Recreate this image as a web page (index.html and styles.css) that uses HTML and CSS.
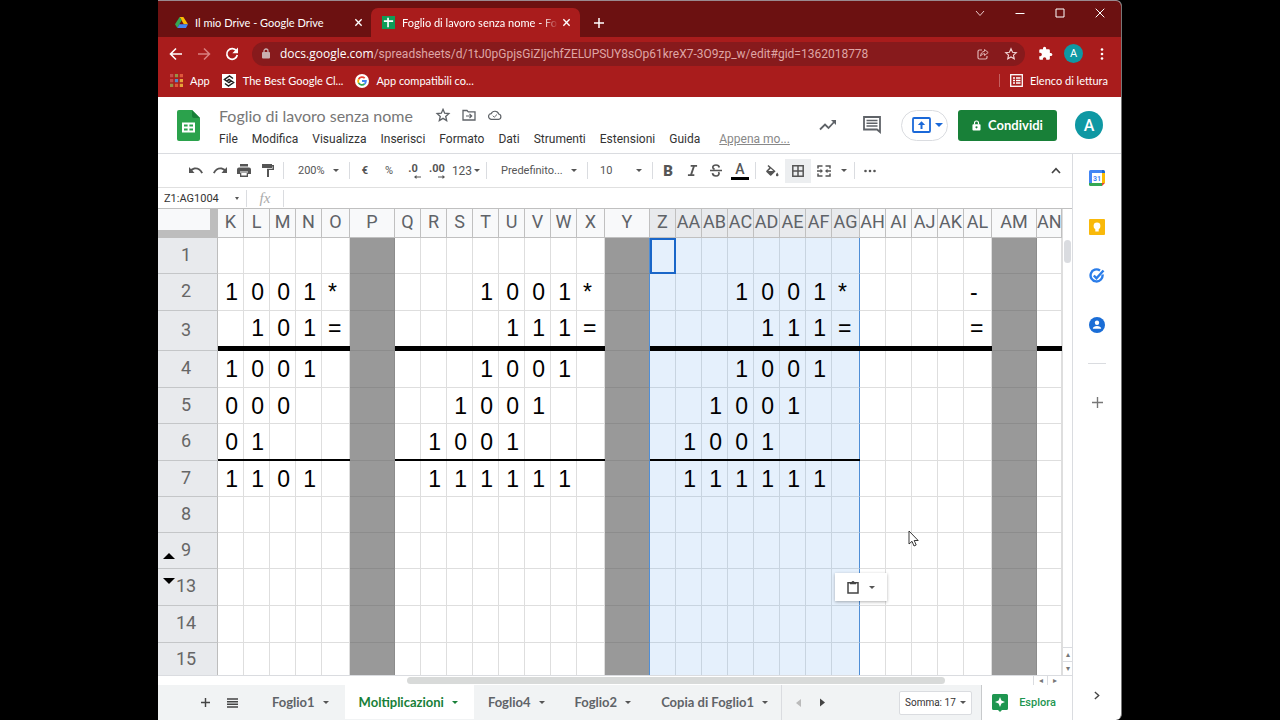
FILE: index.html
```html
<!DOCTYPE html>
<html lang="it">
<head>
<meta charset="utf-8">
<title>Foglio di lavoro senza nome</title>
<link rel="stylesheet" href="styles.css">
</head>
<body>
<div class="window">
  <div class="tabstrip">
    <div class="tab">
      <svg class="favicon" viewBox="0 0 14 14"><path d="M5 1h4l5 8H9.500z" fill="#fbbc04"/><path d="M5 1l2.200 3.700L2.500 13 0 9z" fill="#34a853"/><path d="M4.700 9H14l-2.200 4H2.500z" fill="#4285f4"/></svg>
      <span class="tab-title">Il mio Drive - Google Drive</span>
      <button class="tab-close" aria-label="Chiudi scheda"><svg viewBox="0 0 10 10" width="9" height="9"><path d="M1.500 1.500l7 7M8.500 1.500l-7 7" stroke="#fff" stroke-width="1.500"/></svg></button>
    </div>
    <div class="tab tab-active">
      <svg class="favicon" viewBox="0 0 14 14"><rect width="14" height="14" fill="#0f9d58"/><path d="M2 5.500h10M6.500 2v10" stroke="#fff" stroke-width="1.800"/></svg>
      <span class="tab-title tab-title-fade">Foglio di lavoro senza nome - Fo</span>
      <button class="tab-close" aria-label="Chiudi scheda"><svg viewBox="0 0 10 10" width="9" height="9"><path d="M1.500 1.500l7 7M8.500 1.500l-7 7" stroke="#fff" stroke-width="1.500"/></svg></button>
    </div>
    <button class="new-tab" aria-label="Nuova scheda"><svg viewBox="0 0 12 12" width="12" height="12"><path d="M6 1v10M1 6h10" stroke="#fff" stroke-width="1.500"/></svg></button>
    <div class="window-controls">
      <button aria-label="Cerca schede"><svg viewBox="0 0 10 10" width="10" height="10"><path d="M1 3l4 4.500L9 3" fill="none" stroke="#e9c9c9"/></svg></button>
      <button aria-label="Riduci"><svg viewBox="0 0 10 10" width="10" height="10"><path d="M.5 5.500h9" stroke="#fff"/></svg></button>
      <button aria-label="Ingrandisci"><svg viewBox="0 0 10 10" width="10" height="10"><path d="M1 1h8v8H1z" fill="none" stroke="#fff"/></svg></button>
      <button aria-label="Chiudi"><svg viewBox="0 0 10 10" width="10" height="10"><path d="M.7.700l8.600 8.600M9.300.700L.7 9.300" stroke="#fff"/></svg></button>
    </div>
  </div>

  <div class="navbar">
    <button class="nav-btn" aria-label="Indietro"><svg viewBox="0 0 14 14" width="14" height="14"><path d="M13 7H2M7 1.500L1.500 7 7 12.500" fill="none" stroke="#fff" stroke-width="1.600"/></svg></button>
    <button class="nav-btn" aria-label="Avanti"><svg viewBox="0 0 14 14" width="14" height="14"><path d="M1 7h11M7 1.500L12.500 7 7 12.500" fill="none" stroke="#d98080" stroke-width="1.500"/></svg></button>
    <button class="nav-btn" aria-label="Ricarica"><svg viewBox="0 0 14 14" width="14" height="14"><path d="M11.500 4A5.300 5.300 0 1 0 12.300 8" fill="none" stroke="#fff" stroke-width="1.700"/><path d="M13 .5v5.700H7.300z" fill="#fff"/></svg></button>
    <div class="address">
      <svg viewBox="0 0 8 11" width="8" height="11"><rect y="4" width="8" height="6.500" rx="1" fill="#c9b0b0"/><path d="M2 4.500V3a2 2 0 0 1 4 0v1.500" fill="none" stroke="#c9b0b0" stroke-width="1.300"/></svg>
      <label for="url">docs.google.com</label><input id="url" value="/spreadsheets/d/1tJ0pGpjsGiZIjchfZELUPSUY8sOp61kreX7-3O9zp_w/edit#gid=1362018778">
      <button class="address-btn" aria-label="Condividi pagina"><svg viewBox="0 0 12 12" width="12" height="12"><path d="M5 2H2.500A1.500 1.500 0 0 0 1 3.500v6A1.500 1.500 0 0 0 2.500 11h6A1.500 1.500 0 0 0 10 9.500V8" fill="none" stroke="#e0b4b4" stroke-width="1.200"/><path d="M7.500 1.500L11.200 4.500 7.500 7.500V5.700C5.500 5.700 4.300 6.700 3.500 8.200 3.700 5.500 5 3.600 7.500 3.300z" fill="none" stroke="#e0b4b4"/></svg></button>
      <button class="address-btn" aria-label="Preferiti"><svg viewBox="0 0 24 24" width="14" height="14"><path d="M12 3l2.700 6 6.300.6-4.800 4.300 1.400 6.400L12 17l-5.600 3.300 1.400-6.400L3 9.600 9.300 9z" fill="none" stroke="#f0d0d0" stroke-width="2"/></svg></button>
    </div>
    <button class="nav-btn" aria-label="Estensioni"><svg viewBox="0 0 24 24" width="15" height="15"><path fill="#fff" d="M20.500 11H19V7a2 2 0 0 0-2-2h-4V3.500a2.500 2.500 0 0 0-5 0V5H4a2 2 0 0 0-2 2v3.800h1.500a2.700 2.700 0 0 1 0 5.400H2V20c0 1.100.9 2 2 2h3.800v-1.500a2.700 2.700 0 0 1 5.400 0V22H17a2 2 0 0 0 2-2v-4h1.500a2.500 2.500 0 0 0 0-5z"/></svg></button>
    <button class="avatar avatar-small">A</button>
    <button class="nav-btn" aria-label="Menu"><svg viewBox="0 0 4 14" width="4" height="14"><g fill="#fff"><circle cx="2" cy="2.500" r="1.300"/><circle cx="2" cy="7" r="1.300"/><circle cx="2" cy="11.500" r="1.300"/></g></svg></button>
  </div>

  <div class="bookmarks">
    <a href="#"><svg viewBox="0 0 12 12" width="13" height="13"><path d="M0 0h3v3H0zM0 4.500h3v3H0z" fill="#c74c4c"/><path d="M0 9h3v3H0zM4.500 0h3v3h-3z" fill="#9a8f45"/><path d="M9 0h3v3H9zM4.500 9h3v3h-3z" fill="#e0573b"/><path d="M4.500 4.500h3v3h-3z" fill="#5b86c8"/><path d="M9 4.500h3v3H9zM9 9h3v3H9z" fill="#e8a33a"/></svg>App</a>
    <a href="#"><svg viewBox="0 0 14 14" width="14" height="14"><rect width="14" height="14" fill="#fff"/><path d="M11 4.500L7.500 2 2.500 5.500 7 8.500l2-1.300M3 9.500L6.500 12l5-3.500L7 5.500 5 6.800" fill="none" stroke="#222" stroke-width="1.500"/></svg>The Best Google Cl...</a>
    <a href="#"><svg viewBox="0 0 14 14" width="14" height="14"><circle cx="7" cy="7" r="7" fill="#fff"/><g fill="none" stroke-width="1.800"><path d="M3.600 5.200A3.900 3.900 0 0 1 9.700 4.200" stroke="#ea4335"/><path d="M3.600 5.200a3.900 3.900 0 0 0 0 3.700" stroke="#fbbc04"/><path d="M3.600 8.900a3.900 3.900 0 0 0 5.900 1.100" stroke="#34a853"/><path d="M9.500 10A3.900 3.900 0 0 0 10.900 7H7" stroke="#4285f4"/></g></svg>App compatibili co...</a>
    <a href="#" class="reading-list"><svg viewBox="0 0 13 13" width="13" height="13"><rect x=".7" y=".7" width="11.600" height="11.600" fill="none" stroke="#fff" stroke-width="1.300"/><path d="M3 4h2M3 6.500h2M3 9h2M6 4h4.500M6 6.500h4.500M6 9h4.500" stroke="#fff" stroke-width="1.300"/></svg>Elenco di lettura</a>
  </div>

  <header class="doc-header">
    <svg class="sheets-logo" viewBox="0 0 23 31" width="23" height="31"><path d="M2 0h13l8 8v21a2 2 0 0 1-2 2H2a2 2 0 0 1-2-2V2a2 2 0 0 1 2-2z" fill="#2ba24c"/><path d="M15 0l8 8h-6a2 2 0 0 1-2-2z" fill="#188038"/><path d="M5 12.500h13v10H5zM7 14.500v2h3.600v-2zM12.400 14.500v2H16v-2zM7 18.500v2h3.600v-2zM12.400 18.500v2H16v-2z" fill="#fff" fill-rule="evenodd"/></svg>
    <div class="doc-info">
      <div class="title-row">
        <input class="doc-title" aria-label="Rinomina" value="Foglio di lavoro senza nome">
        <button class="icon-btn" aria-label="Speciali"><svg viewBox="0 0 24 24" width="16" height="16"><path d="M12 3.500l2.500 5.800 6.300.6-4.700 4.200 1.400 6.200L12 17l-5.500 3.300 1.400-6.200-4.700-4.200 6.300-.6z" fill="none" stroke="#5f6368" stroke-width="2"/></svg></button>
        <button class="icon-btn" aria-label="Sposta"><svg viewBox="0 0 14 12" width="14" height="12"><path d="M1 1.500h4l1.300 1.400H13v8.100H1z" fill="none" stroke="#5f6368" stroke-width="1.300"/><path d="M4 7h5.500M7.500 4.800L9.700 7 7.500 9.200" fill="none" stroke="#5f6368" stroke-width="1.200"/></svg></button>
        <button class="icon-btn" aria-label="Stato"><svg viewBox="0 0 14 10" width="14" height="10"><path d="M3.500 9.300a2.800 2.800 0 0 1-.3-5.600 4 4 0 0 1 7.500.3 2.700 2.700 0 0 1 0 5.300z" fill="none" stroke="#5f6368" stroke-width="1.200"/><path d="M4.800 5.700l1.500 1.500 2.700-2.700" fill="none" stroke="#5f6368"/></svg></button>
      </div>
      <nav class="menu">
        <button>File</button><button>Modifica</button><button>Visualizza</button><button>Inserisci</button><button>Formato</button><button>Dati</button><button>Strumenti</button><button>Estensioni</button><button>Guida</button><a href="#">Appena mo...</a>
      </nav>
    </div>
    <div class="doc-actions">
      <button class="icon-btn" aria-label="Attività"><svg viewBox="0 0 18 12" width="18" height="12"><path d="M1 10.500L6 5.500l3.500 3.500L16 2" fill="none" stroke="#5f6368" stroke-width="1.800"/><path d="M12 1h5v5z" fill="#5f6368"/></svg></button>
      <button class="icon-btn comments" aria-label="Commenti"><svg viewBox="0 0 18 18" width="18" height="18"><path d="M1 1h16v15l-3-2.500H1z" fill="none" stroke="#5f6368" stroke-width="1.800"/><path d="M3.500 4.500h11M3.500 7.200h11M3.500 10h11" stroke="#5f6368" stroke-width="1.500"/></svg></button>
      <button class="present" aria-label="Presenta"><svg viewBox="0 0 19 16" width="19" height="16"><rect x="1" y="1" width="17" height="14" rx="1" fill="none" stroke="#1a68d8" stroke-width="1.800"/><path d="M9.500 12V6" stroke="#1a68d8" stroke-width="2"/><path d="M5.800 8L9.500 4.200 13.200 8z" fill="#1a68d8"/></svg><span class="caret caret-blue"></span></button>
      <button class="share"><svg viewBox="0 0 10 12" width="9" height="11"><rect x=".5" y="4.500" width="9" height="7" rx="1" fill="#fff"/><path d="M2.800 5V3.200a2.200 2.200 0 0 1 4.400 0V5" fill="none" stroke="#fff" stroke-width="1.300"/><circle cx="5" cy="8" r="1.200" fill="#188038"/></svg>Condividi</button>
      <button class="avatar">A</button>
    </div>
  </header>

  <div class="main">
    <div class="editor">
      <div class="toolbar">
        <button class="tool" aria-label="Annulla"><svg viewBox="0 0 14 8" width="14" height="8"><path d="M0 0l1.900 2C5.500-.8 11.500 0 14 5.800l-1.700.7C10 2 6.500 1.400 3.400 3.600L5.500 6H0z" fill="#555"/></svg></button>
        <button class="tool" aria-label="Ripeti"><svg viewBox="0 0 14 8" width="14" height="8"><path d="M14 0l-1.900 2C8.500-.8 2.500 0 0 5.800l1.700.7C4 2 7.500 1.400 10.600 3.600L8.500 6H14z" fill="#555"/></svg></button>
        <button class="tool" aria-label="Stampa"><svg viewBox="0 0 14 13" width="14" height="13"><path d="M3 0h8v2.500H3zM2 3.500h10a2 2 0 0 1 2 2V10h-3V7.500H3V10H0V5.500a2 2 0 0 1 2-2zM4.300 9h5.400v2.500H4.300zM3 8.500V13h8V8.500z" fill="#555" fill-rule="evenodd"/></svg></button>
        <button class="tool" aria-label="Copia formattazione"><svg viewBox="0 0 12 13" width="12" height="13"><path d="M0 0h10v4H0zM10 1h2v5H7v7H5V4.700h5.500V2.500H10z" fill="#555"/></svg></button>
        <span class="sep"></span>
        <label class="drop zoom"><select aria-label="Zoom"><option>200%</option></select></label>
        <span class="sep"></span>
        <button class="tool bold-tool">€</button>
        <button class="tool">%</button>
        <button class="tool decimal">.0<svg viewBox="0 0 7 4" width="7" height="4"><path d="M0 2l2.500-2v1.500H7v1H2.500V4z" fill="#555"/></svg></button>
        <button class="tool decimal">.00<svg viewBox="0 0 7 4" width="7" height="4"><path d="M7 2L4.500 0v1.500H0v1h4.500V4z" fill="#555"/></svg></button>
        <button class="tool number">123<span class="caret"></span></button>
        <span class="sep"></span>
        <label class="drop font"><select aria-label="Carattere"><option>Predefinito...</option></select></label>
        <span class="sep"></span>
        <label class="drop size"><select aria-label="Dimensione"><option>10</option></select></label>
        <span class="sep"></span>
        <button class="tool bold-big">B</button>
        <button class="tool" aria-label="Corsivo"><svg viewBox="0 0 12 12" width="11" height="11"><path d="M4 1h7M1 11h7M7.700 1L4.300 11" stroke="#555" stroke-width="2"/></svg></button>
        <button class="tool" aria-label="Barrato"><svg viewBox="0 0 12 13" width="12" height="13"><path d="M0 6.500h12" stroke="#555" stroke-width="1.500"/><path d="M9.300 3.500C9 1.800 7.800 1 6 1 4 1 2.800 2 2.800 3.300c0 1 .7 1.700 1.800 2.100M8.500 8c1.500 2-.2 4-2.500 4-2 0-3.300-1-3.500-2.800" fill="none" stroke="#555" stroke-width="1.700"/></svg></button>
        <button class="tool text-color">A</button>
        <span class="sep"></span>
        <button class="tool wide" aria-label="Riempimento"><svg viewBox="0 0 13 12" width="13" height="12"><path d="M2.500 0L1.500 1l1.800 1.800L.4 5.700a.9.900 0 0 0 0 1.200l3.700 3.700a.9.900 0 0 0 1.200 0L9.600 6.300z" fill="#555"/><path d="M2.300 6L4.800 3.600 7.200 6z" fill="#fff"/><path d="M11.200 7.500c2 2.500 1.300 3.800 0 3.800s-2-1.300 0-3.800z" fill="#555"/></svg></button>
        <button class="tool wide tool-on" aria-label="Bordi"><svg viewBox="0 0 12 12" width="12" height="12"><path d="M.8.800h10.400v10.400H.8zM6 1v10M1 6h10" fill="none" stroke="#555" stroke-width="1.500"/></svg></button>
        <button class="tool wide" aria-label="Unisci celle"><svg viewBox="0 0 14 12" width="14" height="12"><path d="M1 3.500V1h4.500M8.500 1H13v2.500M1 8.500V11h4.500M8.500 11H13V8.500M0 6h4.500M14 6H9.500" fill="none" stroke="#555" stroke-width="1.500"/><path d="M3.500 3.800L6 6 3.500 8.200zM10.500 3.800L8 6l2.500 2.200z" fill="#555"/></svg></button>
        <button class="tool narrow" aria-label="Tipo di unione"><span class="caret"></span></button>
        <span class="sep"></span>
        <button class="tool" aria-label="Altro"><svg viewBox="0 0 12 4" width="12" height="4"><g fill="#555"><circle cx="1.500" cy="2" r="1.300"/><circle cx="6" cy="2" r="1.300"/><circle cx="10.500" cy="2" r="1.300"/></g></svg></button>
        <button class="tool collapse" aria-label="Nascondi menu"><svg viewBox="0 0 10 7" width="10" height="7"><path d="M1 6l4-4.300L9 6" fill="none" stroke="#444" stroke-width="1.700"/></svg></button>
      </div>

      <div class="formula-bar">
        <input class="name-box" aria-label="Intervallo" value="Z1:AG1004"><span class="caret caret-small"></span>
        <label class="fx" for="formula">fx</label>
        <input id="formula" class="formula">
      </div>

      <div class="grid-area">
        <div class="grid-scroll">
          <table class="grid"><colgroup></colgroup><thead></thead><tbody></tbody></table>
          <button class="paste" aria-label="Opzioni incolla"><svg viewBox="0 0 12 14" width="12" height="14"><path d="M1 2.800h10V13H1z" fill="none" stroke="#444" stroke-width="1.500"/><path d="M3 2h1.500a1.600 1.600 0 0 1 3 0H9v2.200H3z" fill="#444"/></svg><span class="caret"></span></button>
          <svg class="pointer" viewBox="0 0 11 17" width="11" height="17"><path d="M1 1v13l3-2.700 2 4.700 2.200-1-2-4.500h4z" fill="#fff" stroke="#222" stroke-width=".9"/></svg>
        </div>
        <div class="vscroll"><span class="vthumb"></span><button aria-label="Su">▴</button><button aria-label="Giù">▾</button></div>
      </div>

      <div class="hscroll"><div class="htrack"><span class="hthumb"></span></div><button aria-label="Sinistra">◂</button><button aria-label="Destra">▸</button></div>

      <div class="sheetbar">
        <button class="tool" aria-label="Aggiungi foglio"><svg viewBox="0 0 10 10" width="9" height="9"><path d="M5 0v10M0 5h10" stroke="#444" stroke-width="1.600"/></svg></button>
        <button class="tool all-sheets" aria-label="Tutti i fogli"><svg viewBox="0 0 11 10" width="11" height="10"><path d="M0 1h11M0 3.700h11M0 6.300h11M0 9h11" stroke="#444" stroke-width="1.500"/></svg></button>
        <div class="sheet-tabs">
          <button>Foglio1<span class="caret"></span></button>
          <button class="sheet-active">Moltiplicazioni<span class="caret"></span></button>
          <button>Foglio4<span class="caret"></span></button>
          <button>Foglio2<span class="caret"></span></button>
          <button>Copia di Foglio1<span class="caret"></span></button>
        </div>
        <div class="sheet-arrows">
          <button class="tool" aria-label="Precedente"><svg viewBox="0 0 5 8" width="5" height="8"><path d="M5 0v8L0 4z" fill="#bbb"/></svg></button>
          <button class="tool" aria-label="Successivo"><svg viewBox="0 0 5 8" width="5" height="9"><path d="M0 0v8l5-4z" fill="#444"/></svg></button>
        </div>
        <label class="drop sum"><select aria-label="Riepilogo"><option>Somma: 17</option></select></label>
        <button class="explore"><svg viewBox="0 0 16 18" width="16" height="18"><path d="M1.500 0h13A1.500 1.500 0 0 1 16 1.500v13a1.500 1.500 0 0 1-1.500 1.500H10l-2 2-2-2H1.500A1.500 1.500 0 0 1 0 14.500v-13A1.500 1.500 0 0 1 1.500 0z" fill="#1e9650"/><path d="M8 3l1.400 3.600L13 8 9.400 9.400 8 13 6.600 9.400 3 8l3.600-1.400z" fill="#fff"/></svg>Esplora</button>
      </div>
    </div>

    <aside class="side">
      <button aria-label="Calendar"><svg viewBox="0 0 16 16" width="16" height="16"><path d="M0 1.500A1.500 1.500 0 0 1 1.500 0H13v3H3v10H0z" fill="#4285f4"/><path d="M13 0h1.500A1.500 1.500 0 0 1 16 1.500V3h-3z" fill="#1967d2"/><path d="M13 3h3v10h-3z" fill="#fbbc04"/><path d="M0 13h13v3H1.500A1.500 1.500 0 0 1 0 14.500z" fill="#34a853"/><path d="M13 13h3l-3 3z" fill="#ea4335"/><path d="M3 3h10v10H3z" fill="#fff"/><text x="8" y="10.500" text-anchor="middle" font-size="7" font-family="Roboto, sans-serif" font-weight="700" fill="#4285f4">31</text></svg></button>
      <button aria-label="Keep"><svg viewBox="0 0 16 16" width="16" height="16"><rect width="16" height="16" rx="1" fill="#f9b90a"/><circle cx="8" cy="7" r="3.400" fill="#fff"/><path d="M6.300 9h3.400v3.500H6.300z" fill="#fff"/></svg></button>
      <button aria-label="Tasks"><svg viewBox="0 0 16 16" width="16" height="16"><path d="M11 2.500A6 6 0 1 0 13.500 6.500" fill="none" stroke="#2b7de9" stroke-width="2.400"/><path d="M4.800 7.500l2.700 2.700L14.500 2.500" fill="none" stroke="#2b7de9" stroke-width="2.400"/></svg></button>
      <button aria-label="Contatti"><svg viewBox="0 0 16 16" width="16" height="16"><circle cx="8" cy="8" r="8" fill="#1a6dd6"/><circle cx="8" cy="5.700" r="2.200" fill="#fff"/><path d="M3.800 11.800c0-3.700 8.400-3.700 8.400 0z" fill="#fff"/></svg></button>
      <span class="side-line"></span>
      <button aria-label="Componenti aggiuntivi"><svg viewBox="0 0 12 12" width="11" height="11"><path d="M6 0v12M0 6h12" stroke="#777" stroke-width="1.500"/></svg></button>
      <button class="side-hide" aria-label="Nascondi riquadro"><svg viewBox="0 0 7 10" width="6" height="9"><path d="M1 1l4.500 4L1 9" fill="none" stroke="#444" stroke-width="1.600"/></svg></button>
    </aside>
  </div>
</div>
<script src="grid.js"></script>
</body>
</html>
```
FILE: grid.js
```js
const columns = ['K','L','M','N','O','P','Q','R','S','T','U','V','W','X','Y','Z',
  'AA','AB','AC','AD','AE','AF','AG','AH','AI','AJ','AK','AL','AM','AN'];
const spacers = ['P', 'Y', 'AM'];
const operators = ['O', 'X', 'AG', 'AL'];
const index = name => columns.indexOf(name);
const between = (name, from, to) => index(name) >= index(from) && index(name) <= index(to);

// Each entry is [first column, values running to the right].
const rows = [
  { n: 1, cells: [] },
  { n: 2, cells: [['K', '1001*'], ['T', '1001*'], ['AC', '1001*'], ['AL', '-']] },
  { n: 3, cells: [['L', '101='], ['U', '111='], ['AD', '111='], ['AL', '=']] },
  { n: 4, cells: [['K', '1001'], ['T', '1001'], ['AC', '1001']] },
  { n: 5, cells: [['K', '000'], ['S', '1001'], ['AB', '1001']] },
  { n: 6, cells: [['K', '01'], ['R', '1001'], ['AA', '1001']] },
  { n: 7, cells: [['K', '1101'], ['R', '111111'], ['AA', '111111']] },
  { n: 8, cells: [] }, { n: 9, cells: [] }, { n: 13, cells: [] },
  { n: 14, cells: [] }, { n: 15, cells: [] }
];

const table = document.querySelector('.grid');
const colgroup = table.querySelector('colgroup');
const addCol = cls => { const c = document.createElement('col'); c.className = cls; colgroup.append(c); };
addCol('col-head');
columns.forEach(c => addCol(spacers.includes(c) ? 'col-spacer' : operators.includes(c) ? 'col-op' : c === 'AN' ? 'col-last' : 'col-digit'));

const head = table.tHead.insertRow();
const corner = document.createElement('th');
corner.className = 'corner';
head.append(corner);
columns.forEach(c => {
  const th = document.createElement('th');
  th.scope = 'col';
  th.textContent = c;
  if (between(c, 'Z', 'AG')) th.className = 'head-selected';
  head.append(th);
});

rows.forEach(row => {
  const tr = table.tBodies[0].insertRow();
  tr.className = 'row-' + row.n;
  const th = document.createElement('th');
  th.scope = 'row';
  th.textContent = row.n;
  tr.append(th);
  const values = {};
  row.cells.forEach(([start, text]) => [...text].forEach((ch, i) => { values[columns[index(start) + i]] = ch; }));
  columns.forEach(c => {
    const td = tr.insertCell();
    td.textContent = values[c] || '';
    if (/[*=-]/.test(values[c] || '')) td.classList.add('operator');
    if (c === 'Y') td.classList.add('before-selection');
    if (spacers.includes(c)) { td.classList.add('spacer'); return; }
    if (between(c, 'Z', 'AG')) td.classList.add('selected');
    if (c === 'AG') td.classList.add('selected-end');
    if (c === 'Z' && row.n === 1) td.classList.add('active');
    if (row.n === 3) td.classList.add('thick');
    if (row.n === 6 && index(c) <= index('AG')) td.classList.add('thin');
  });
});
```
FILE: styles.css
```css
* { box-sizing: border-box; }
html, body { height: 100%; }
body { margin: 0; padding: 0 158px; background: #000; font-family: Roboto, sans-serif; color: #444; overflow: hidden; }
button, input, select { font: inherit; color: inherit; border: 0; padding: 0; margin: 0; background: none; outline: 0; }
button { display: inline-flex; align-items: center; justify-content: center; white-space: nowrap; }
a { color: inherit; text-decoration: none; }
svg { display: block; flex: none; }

.window { height: 100vh; display: flex; flex-direction: column; background: #fff; border-top: 1px solid #9a8a90; border-right: 1px solid #777; border-radius: 0 6px 6px 0; overflow: hidden; }
.caret { border: 3px solid transparent; border-top-color: #555; border-bottom: 0; flex: none; }
.caret-blue { border-width: 4px; border-bottom: 0; border-top-color: #1a68d8; }
.caret-small { margin-left: 7px; border-width: 2px; border-top-width: 3px; border-bottom: 0; }

/* Browser frame */
.tabstrip { flex: none; height: 36px; display: flex; align-items: flex-end; background: #6c1111; color: #fff; font: 11px Lato, sans-serif; }
.tab { height: 29px; width: 213px; display: flex; align-items: center; padding: 0 4px 0 17px; }
.tab-active { width: 209px; padding: 0 5px 0 11px; background: #a91c1c; border-radius: 7px 7px 0 0; }
.favicon { width: 13px; height: 13px; margin-right: 7px; }
.tab-title { flex: 1; white-space: nowrap; overflow: hidden; }
.tab-title-fade { mask-image: linear-gradient(90deg, #000 90%, transparent); }
.tab-close { width: 17px; height: 17px; }
.new-tab { width: 38px; height: 29px; }
.window-controls { margin-left: auto; align-self: flex-start; display: flex; padding-right: 1px; }
.window-controls button { width: 40px; height: 24px; }

.navbar { flex: none; height: 33px; display: flex; align-items: center; padding: 0 5px 0 4px; background: #a91c1c; }
.nav-btn { width: 28px; height: 28px; }
.address { flex: 1; height: 24px; display: flex; align-items: center; margin: 0 6px; padding: 0 0 0 10px; border-radius: 12px; background: #871a1c; color: #fff; font: 12px "Open Sans", sans-serif; }
.address label { padding-left: 10px; }
.address input { flex: 1; min-width: 0; color: #dfa5a5; font-family: Roboto, sans-serif; }
.address-btn { width: 28px; height: 24px; }
.avatar { width: 28px; height: 28px; border-radius: 50%; background: #0f98a3; color: #fff; font-size: 16px; font-weight: 500; }
.avatar-small { width: 19px; height: 19px; margin: 0 5px; font-size: 11px; font-weight: 400; }

.bookmarks { flex: none; height: 27px; display: flex; align-items: center; gap: 12px; padding: 0 13px 6px 12px; background: #a91c1c; color: #fff; font: 11px Lato, sans-serif; }
.bookmarks a { display: flex; align-items: center; gap: 7px; white-space: nowrap; }
.bookmarks .reading-list { margin-left: auto; padding-left: 10px; border-left: 1px solid #c46060; }

/* Document header */
.doc-header { flex: none; height: 57px; display: flex; align-items: center; padding: 0 18px 0 19px; border-bottom: 1px solid #dadce0; }
.doc-info { flex: 1; margin-left: 19px; padding-top: 6px; }
.title-row { display: flex; align-items: center; gap: 10px; height: 22px; }
.doc-title { width: 206px; font: 16px Lato, sans-serif; color: #777; }
.icon-btn { min-width: 16px; }
.menu { display: flex; align-items: center; gap: 14px; height: 26px; font-size: 12px; color: #333; white-space: nowrap; }
.menu a { margin-left: 5px; color: #888; text-decoration: underline; }
.doc-actions { display: flex; align-items: center; }
.comments { margin: 0 20px 0 26px; }
.present { width: 47px; height: 31px; padding-left: 5px; gap: 4px; border: 1px solid #dadce0; border-radius: 16px; }
.share { width: 99px; height: 31px; margin: 0 18px 0 10px; gap: 7px; border-radius: 3px; background: #188038; color: #fff; font: bold 13px Lato, sans-serif; }

.main { flex: 1; min-height: 0; display: flex; }
.editor { flex: 1; min-width: 0; display: flex; flex-direction: column; }

/* Toolbar */
.toolbar { flex: none; height: 34px; display: flex; align-items: center; padding: 0 4px 0 26px; border-bottom: 1px solid #e0e0e0; font-size: 11px; color: #555; }
.tool { flex: none; width: 24px; height: 24px; }
.wide { width: 26px; }
.tool-on { background: #eceef0; }
.sep { flex: none; width: 1px; height: 17px; margin: 0 3px; background: #dadce0; }
.drop { position: relative; display: flex; align-items: center; height: 24px; }
.drop select { width: 100%; appearance: none; }
.drop::after { content: ""; position: absolute; right: 7px; border: 3px solid transparent; border-top-color: #555; border-bottom: 0; }
.zoom { width: 59px; padding-left: 11px; }
.font { width: 94px; padding-left: 11px; }
.size { width: 58px; padding-left: 9px; }
.bold-tool { font-weight: 700; }
.decimal { font-weight: 700; flex-direction: column; align-items: center; }
.decimal svg { margin-left: 9px; }
.number { width: 34px; gap: 2px; font-size: 12px; }
.bold-big { font-size: 15px; font-weight: 900; }
.text-color { height: 18px; font-size: 14px; font-weight: 500; width: 18px; margin: 0 3px; border-bottom: 3px solid #000; }
.narrow { width: 14px; }
.collapse { margin-left: auto; }

.formula-bar { flex: none; height: 20px; display: flex; align-items: center; font-size: 11px; color: #333; }
.name-box { width: 70px; padding-left: 6px; }
.fx { width: 38px; margin-left: 7px; text-align: center; border: 1px solid #dadce0; border-width: 0 1px; color: #aaa; font: italic 15px/17px "Liberation Serif", serif; }
.formula { flex: 1; }

/* Grid */
.grid-area { flex: 1; min-height: 0; display: flex; border-top: 1px solid #c0c0c0; }
.grid-scroll { position: relative; flex: 1; min-width: 0; overflow: hidden; }
.grid { table-layout: fixed; width: 904px; border-collapse: separate; border-spacing: 0; }
.col-head { width: 60px; }
.col-digit { width: 26px; }
.col-op { width: 28px; }
.col-spacer { width: 45px; }
.col-last { width: 25px; }
.grid th, .grid td { padding: 0; line-height: 24px; white-space: nowrap; }
.grid thead th { height: 29px; padding-bottom: 2px; font-size: 18px; font-weight: 400; color: #5f6368; background: #f8f9fa; border-right: 1px solid #c0c0c0; border-bottom: 1px solid #c0c0c0; text-align: center; }
.grid thead .head-selected { background: #e8eaed; }
.grid thead .corner { background: #f8f9fa; border-right: 8px solid #bdbdbd; border-bottom: 8px solid #bdbdbd; }
.grid tbody th { position: relative; padding: 0 3px 2px 0; font-size: 18px; font-weight: 400; color: #666; background: #e8eaed; border-right: 1px solid #bdbdbd; border-bottom: 1px solid #c4c6c8; }
.grid td { position: relative; height: 37px; padding-right: 5px; text-align: right; font-family: "Liberation Sans", Arial, sans-serif; font-size: 23px; color: #000; border-right: 1px solid #dedede; border-bottom: 1px solid #dedede; }
.row-1 td, .row-5 td, .row-8 td, .row-9 td, .row-7 td { height: 36px; }
.row-3 td { height: 40px; }
.row-15 td { height: 34px; }
.grid td.operator { padding-left: 6px; padding-right: 0; text-align: left; }
.grid .selected { background: #e5f0fc; border-color: #c8d4e0; }
.grid .selected-end { border-right-color: #4f8ed6; }
.grid .spacer { background: #999; border-color: #8c8c8c; }
.grid .before-selection { border-right-color: #4f8ed6; }
.grid .thick { padding-bottom: 5px; }
.thick::after, .thin::after { content: ""; position: absolute; left: 0; right: -1px; bottom: -1px; background: #000; }
.thick::after { height: 5px; }
.thin::after { height: 2px; }
.grid .active { border: 2px solid #1a66c8; }
.row-9 th::after, .row-13 th::after { content: ""; position: absolute; left: 5px; border: 6px solid transparent; }
.row-9 th::after { bottom: 9px; border-bottom-color: #000; border-top: 0; }
.row-13 th::after { top: 9px; border-top-color: #000; border-bottom: 0; }
.paste { position: absolute; left: 677px; top: 364px; width: 52px; height: 28px; gap: 10px; background: #fff; box-shadow: 0 1px 3px rgba(0, 0, 0, .3); }
.pointer { position: absolute; left: 750px; top: 321px; }

/* Scroll bars */
.vscroll { flex: none; width: 10px; display: flex; flex-direction: column; border-left: 1px solid #dedede; }
.vthumb { width: 7px; height: 23px; margin: 31px 0 auto 1px; border-radius: 4px; background: #dadce0; }
.vscroll button, .hscroll button { width: 9px; height: 14px; font-size: 8px; color: #777; border-top: 1px solid #dadce0; }
.hscroll { flex: none; height: 10px; display: flex; padding-right: 11px; border-top: 1px solid #dadce0; }
.hscroll button { width: 14px; height: 9px; border: 0; border-left: 1px solid #dadce0; }
.htrack { flex: 1; padding: 1px 88px 0 249px; }
.hthumb { display: block; height: 7px; border-radius: 4px; background: #d8dad9; }

/* Sheet tabs */
.sheetbar { flex: none; height: 35px; display: flex; align-items: center; padding-left: 35px; background: #f1f3f4; }
.all-sheets { margin-left: 3px; }
.sheet-tabs { flex: 1; min-width: 0; display: flex; height: 35px; margin-left: 14px; padding-bottom: 1px; border-right: 1px solid #dadce0; font: bold 13px Lato, sans-serif; color: #5f6368; }
.sheet-tabs button { padding: 0 16px 0 14px; gap: 8px; }
.sheet-tabs .sheet-active { background: #fff; color: #188038; }
.sheet-active .caret { border-top-color: #188038; }
.sheet-arrows { flex: none; display: flex; padding: 0 65px 0 4px; }
.sum { flex: none; width: 73px; padding-left: 5px; border: 1px solid #dadce0; background: #fff; font-size: 10px; color: #333; border-radius: 2px; }
.drop.sum::after { right: 5px; }
.explore { flex: none; width: 91px; height: 35px; margin-left: 9px; padding-right: 6px; gap: 11px; border-left: 1px solid #c8cacc; background: #fff; color: #1e9650; font-size: 11px; font-weight: 500; }

/* Side panel */
.side { flex: none; width: 49px; display: flex; flex-direction: column; align-items: center; padding: 16px 0 17px; border-left: 1px solid #dadce0; }
.side button { width: 32px; height: 16px; margin-bottom: 33px; }
.side-line { width: 18px; height: 1px; margin: -3px 0 30px; background: #dadce0; }
.side .side-hide { margin: auto 0 0; }
```
